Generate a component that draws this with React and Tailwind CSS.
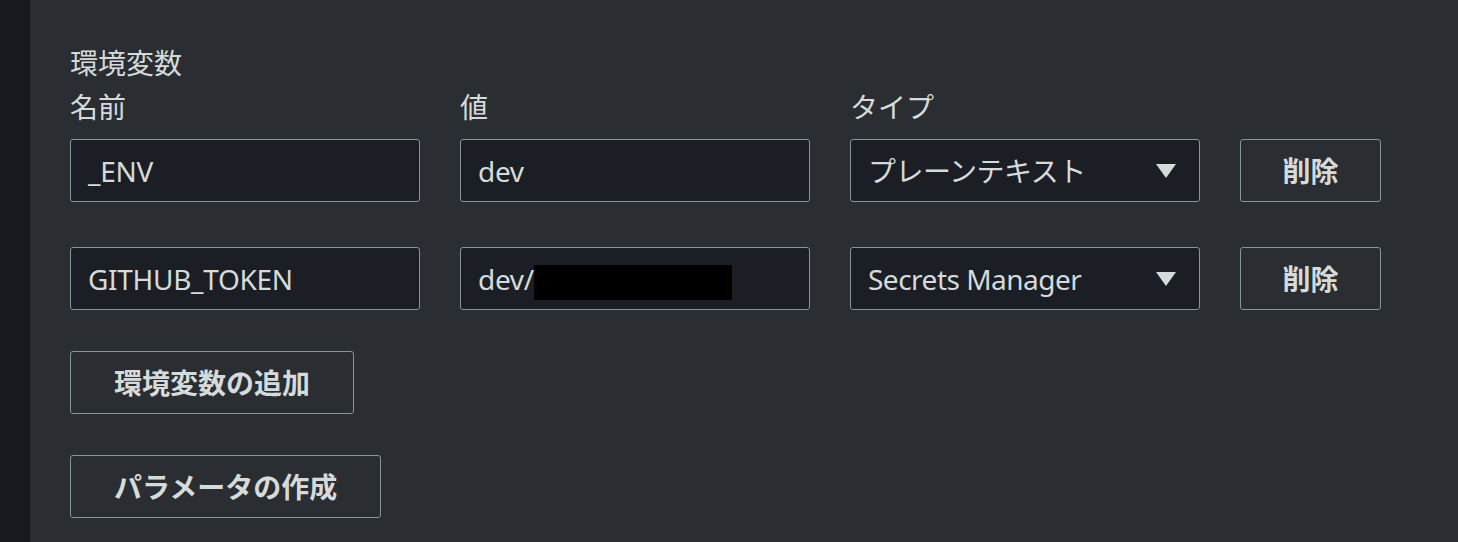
import React from 'react'

const font = { fontFamily: '"Noto Sans", "Noto Sans CJK JP", sans-serif' }

const TextField = ({ children }) => (
  <div className="h-[63px] flex items-center pl-[17px] bg-[#1b1e25] border border-[#879596] rounded-[3px] text-[28px] tracking-[-0.3px] text-[#d5dbdb]">
    {children}
  </div>
)

const SelectField = ({ value }) => (
  <div className="h-[63px] flex items-center justify-between pl-[17px] pr-[23px] bg-[#1b1e25] border border-[#879596] rounded-[3px] text-[28px] tracking-[-0.5px] text-[#d5dbdb]">
    <span>{value}</span>
    <svg width="20" height="16" viewBox="0 0 20 16">
      <polygon points="0,1 20,1 10,15" fill="#d5dbdb" />
    </svg>
  </div>
)

const Button = ({ children, className = '' }) => (
  <button className={`h-[63px] flex items-center justify-center border border-[#879596] rounded-[3px] text-[28px] font-bold text-[#d5dbdb] ${className}`}>
    {children}
  </button>
)

const App = () => {
  const rows = [
    { name: '_ENV', value: 'dev', type: 'プレーンテキスト' },
    { name: 'GITHUB_TOKEN', value: 'dev/', secret: true, type: 'Secrets Manager' },
  ]

  return (
    <div className="flex w-[1458px] h-[542px] overflow-hidden bg-[#2a2d32]" style={font}>
      <div className="w-[30px] shrink-0 bg-[#16191e]" />
      <div className="flex flex-col pl-[40px] pt-[43px]">
        <div className="text-[28px] leading-[40px] text-[#d5dbdb]">環境変数</div>

        <div className="grid grid-cols-[350px_350px_350px_141px] gap-x-[40px]">
          <div className="text-[28px] leading-[40px] text-[#d5dbdb] mt-[4px]">名前</div>
          <div className="text-[28px] leading-[40px] text-[#d5dbdb] mt-[4px]">値</div>
          <div className="text-[28px] leading-[40px] text-[#d5dbdb] mt-[4px]">タイプ</div>
          <div />
        </div>

        <div className="flex flex-col gap-[45px] mt-[12px]">
          {rows.map((row) => (
            <div key={row.name} className="grid grid-cols-[350px_350px_350px_141px] gap-x-[40px]">
              <TextField>{row.name}</TextField>
              <TextField>
                {row.value}
                {row.secret && <span className="inline-block w-[198px] h-[35px] mt-[8px] bg-black" />}
              </TextField>
              <SelectField value={row.type} />
              <Button>削除</Button>
            </div>
          ))}
        </div>

        <Button className="mt-[41px] w-fit px-[43px]">環境変数の追加</Button>
        <Button className="mt-[41px] w-fit px-[43px]">パラメータの作成</Button>
      </div>
    </div>
  )
}

export default App
